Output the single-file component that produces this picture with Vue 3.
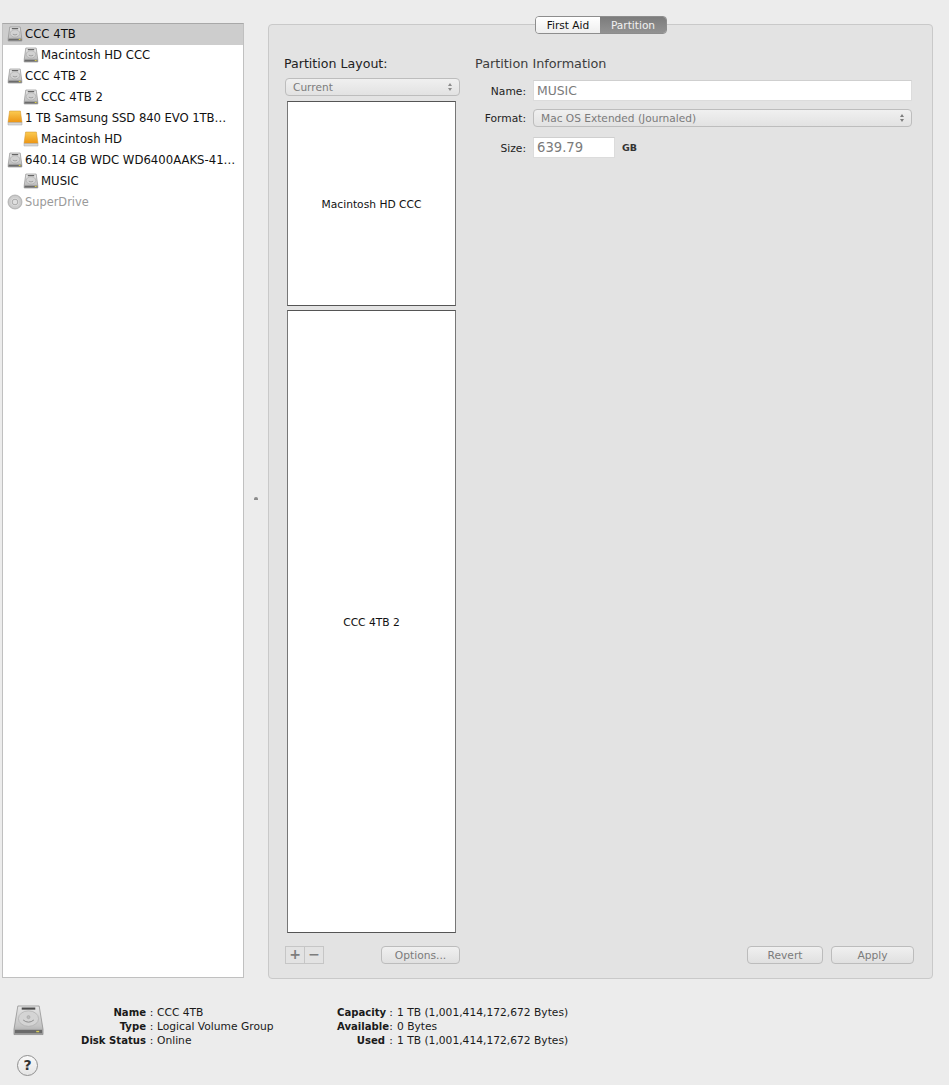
<script setup>
const disks = [
  { label: 'CCC 4TB', kind: 'hd', child: false, selected: true },
  { label: 'Macintosh HD CCC', kind: 'hd', child: true },
  { label: 'CCC 4TB 2', kind: 'hd', child: false },
  { label: 'CCC 4TB 2', kind: 'hd', child: true },
  { label: '1 TB Samsung SSD 840 EVO 1TB…', kind: 'ssd', child: false, tight: true },
  { label: 'Macintosh HD', kind: 'ssd', child: true },
  { label: '640.14 GB WDC WD6400AAKS-41…', kind: 'hd', child: false },
  { label: 'MUSIC', kind: 'hd', child: true },
  { label: 'SuperDrive', kind: 'cd', child: false, muted: true }
]
const infoLeft = [
  ['Name', 'CCC 4TB'],
  ['Type', 'Logical Volume Group'],
  ['Disk Status', 'Online']
]
const infoRight = [
  ['Capacity', '1 TB (1,001,414,172,672 Bytes)'],
  ['Available', '0 Bytes'],
  ['Used', '1 TB (1,001,414,172,672 Bytes)']
]
</script>

<template>
  <div class="window">
    <svg class="defs" width="0" height="0" aria-hidden="true">
      <defs>
        <linearGradient id="hdBody" x1="0" y1="0" x2="0" y2="1">
          <stop offset="0" stop-color="#e6e6e6" />
          <stop offset="0.7" stop-color="#c4c4c4" />
          <stop offset="1" stop-color="#a2a2a2" />
        </linearGradient>
        <linearGradient id="ssdBody" x1="0" y1="0" x2="0" y2="1">
          <stop offset="0" stop-color="#fbcb52" />
          <stop offset="1" stop-color="#ec9412" />
        </linearGradient>
        <radialGradient id="cdBody">
          <stop offset="0" stop-color="#f4f4f4" />
          <stop offset="0.6" stop-color="#d8d8d8" />
          <stop offset="1" stop-color="#bdbdbd" />
        </radialGradient>
      </defs>
    </svg>

    <div class="main">
      <aside class="sidebar">
        <div
          v-for="(d, i) in disks"
          :key="i"
          class="row"
          :class="{ child: d.child, selected: d.selected, muted: d.muted, tight: d.tight }"
        >
          <svg v-if="d.kind === 'hd'" class="ico" viewBox="0 0 16 16">
            <path d="M2.8 1h10.4l1.6 11.5V15H1.2v-2.5z" fill="url(#hdBody)" stroke="#858585" stroke-width=".6" />
            <rect x="4.8" y="2" width="6.4" height="1.2" fill="#666" />
            <ellipse cx="8" cy="7.4" rx="4.8" ry="3.7" fill="#d2d2d2" stroke="#a0a0a0" stroke-width=".5" />
            <path d="M5.8 8.2q2.2 1.5 4.4 0" fill="none" stroke="#8a8a8a" stroke-width=".7" />
            <rect x="1.6" y="12.7" width="12.8" height="1.7" fill="#6c6c6c" />
            <rect x="11.8" y="13.1" width="1.8" height=".9" fill="#e8d83c" />
          </svg>
          <svg v-else-if="d.kind === 'ssd'" class="ico" viewBox="0 0 16 16">
            <path d="M2.6 1h10.8l1.6 11.5H1z" fill="url(#ssdBody)" stroke="#cf9128" stroke-width=".5" />
            <path d="M1 12.5h14V15H1z" fill="#d6d6d6" stroke="#a5a5a5" stroke-width=".5" />
          </svg>
          <svg v-else class="ico" viewBox="0 0 16 16">
            <circle cx="8" cy="8" r="7" fill="url(#cdBody)" stroke="#a6a6a6" stroke-width=".7" />
            <circle cx="8" cy="8" r="4.6" fill="none" stroke="#c8c8c8" stroke-width=".6" />
            <circle cx="8" cy="8" r="2.8" fill="#e8e8e8" stroke="#8d8d8d" stroke-width=".7" />
            <circle cx="8" cy="8" r="1.1" fill="#fff" stroke="#aaa" stroke-width=".4" />
          </svg>
          <span class="label">{{ d.label }}</span>
        </div>
      </aside>

      <div class="divider"><span class="grip"></span></div>

      <section class="panel">
        <div class="tabs">
          <span class="tab">First Aid</span>
          <span class="tab active">Partition</span>
        </div>

        <div class="columns">
          <div class="layout">
            <h2 class="heading">Partition Layout:</h2>
            <div class="select small">
              <span>Current</span>
              <svg class="updown" viewBox="0 0 6 10"><path d="M3 1l2 3H1zM3 9L1 6h4z" fill="#8b8b8b" /></svg>
            </div>
            <div class="blocks">
              <div class="block top">Macintosh HD CCC</div>
              <div class="block bottom">CCC 4TB 2</div>
            </div>
            <div class="layout-actions">
              <div class="stepper">
                <span>+</span>
                <span>−</span>
              </div>
              <button class="btn options">Options...</button>
            </div>
          </div>

          <div class="info">
            <h2 class="heading dim">Partition Information</h2>
            <div class="form">
              <label class="lbl nudge">Name:</label>
              <div class="input wide">MUSIC</div>
              <label class="lbl">Format:</label>
              <div class="select format">
                <span>Mac OS Extended (Journaled)</span>
                <svg class="updown" viewBox="0 0 6 10"><path d="M3 1l2 3H1zM3 9L1 6h4z" fill="#7d7d7d" /></svg>
              </div>
              <label class="lbl nudge size-lbl">Size:</label>
              <div class="size-row">
                <div class="input short">639.79</div>
                <span class="unit">GB</span>
              </div>
            </div>
            <div class="info-actions">
              <button class="btn revert">Revert</button>
              <button class="btn apply">Apply</button>
            </div>
          </div>
        </div>
      </section>
    </div>

    <footer class="footer">
      <div class="footer-icons">
        <svg class="big-hd" viewBox="0 0 32 32">
          <path d="M5 1h22l4 24v5.5H1V25z" fill="url(#hdBody)" stroke="#868686" stroke-width=".7" />
          <rect x="9" y="2.6" width="14" height="2.2" fill="#4c4c4c" />
          <ellipse cx="16" cy="14" rx="10.4" ry="8" fill="#d4d4d4" stroke="#adadad" stroke-width=".7" />
          <circle cx="16" cy="12.5" r="1.6" fill="#bcbcbc" stroke="#9c9c9c" stroke-width=".5" />
          <path d="M10.5 15.5q5.5 4.4 11 0" fill="none" stroke="#8a8a8a" stroke-width="1" />
          <rect x="2" y="25.6" width="28" height="3.6" fill="#6a6a6a" />
          <rect x="24" y="26.7" width="3" height="1.4" fill="#d9cf55" />
        </svg>
        <div class="help">?</div>
      </div>
      <div class="details">
        <div class="detail-group first">
          <template v-for="r in infoLeft" :key="r[0]">
            <span class="k">{{ r[0] }}</span><span class="c">:</span><span class="v">{{ r[1] }}</span>
          </template>
        </div>
        <div class="detail-group second">
          <template v-for="r in infoRight" :key="r[0]">
            <span class="k">{{ r[0] }}</span><span class="c">:</span><span class="v">{{ r[1] }}</span>
          </template>
        </div>
      </div>
    </footer>
  </div>
</template>

<style>
html, body { margin: 0; background: #ececec; }
</style>

<style scoped>
.window {
  width: 949px;
  height: 1085px;
  background: #ececec;
  font-family: "DejaVu Sans", "Liberation Sans", sans-serif;
  color: #111;
  display: flex;
  flex-direction: column;
  overflow: hidden;
  box-sizing: border-box;
}
.defs { position: absolute; }
.main {
  display: flex;
  padding: 23px 16px 0 2px;
  height: 956px;
  box-sizing: border-box;
}
.sidebar {
  width: 242px;
  height: 955px;
  box-sizing: border-box;
  background: #fff;
  border: 1px solid #c0c0c0;
  border-top-color: #a8a8a8;
  flex: none;
}
.row {
  height: 21px;
  box-sizing: border-box;
  padding-bottom: 2px;
  display: flex;
  align-items: center;
  padding-left: 4px;
  font-size: 11.7px;
  white-space: nowrap;
}
.row.child { padding-left: 20px; }
.row.selected { background: #cdcdcd; }
.row.muted { color: #9a9a9a; font-size: 11.4px; }
.row.tight { letter-spacing: -0.1px; }
.ico { width: 16px; height: 16px; flex: none; margin-right: 2px; }
.divider {
  width: 24px;
  flex: none;
  display: flex;
  align-items: center;
  justify-content: center;
}
.grip {
  width: 4px;
  height: 3px;
  border-radius: 2px 2px 0 0;
  background: #8c8c8c;
  margin-top: 18px;
}
.panel {
  position: relative;
  width: 665px;
  height: 955px;
  margin-top: 1px;
  box-sizing: border-box;
  background: #e3e3e3;
  border: 1px solid #c9c9c9;
  border-radius: 4px;
}
.tabs {
  position: absolute;
  top: -9px;
  left: 266px;
  display: flex;
  height: 18px;
  box-sizing: border-box;
  border: 1px solid #8d8d8d;
  border-radius: 4px;
  overflow: hidden;
  font-size: 10.6px;
}
.tab {
  display: flex;
  align-items: center;
  justify-content: center;
  width: 64px;
  background: linear-gradient(#ffffff, #eeeeee);
  color: #111;
}
.tab.active {
  width: 66px;
  background: linear-gradient(#7c7c7c, #929292);
  color: #f2f2f2;
}
.columns {
  display: flex;
  height: 100%;
  box-sizing: border-box;
  padding: 32px 18px 14px 15px;
}
.layout {
  width: 176px;
  flex: none;
  display: flex;
  flex-direction: column;
  margin-right: 15px;
}
.heading {
  margin: 0;
  font-size: 12.6px;
  font-weight: 400;
  line-height: 13px;
  color: #222;
  white-space: nowrap;
}
.heading.dim { color: #3d3d3d; font-size: 12.8px; }
.select {
  box-sizing: border-box;
  display: flex;
  align-items: center;
  justify-content: space-between;
  height: 18px;
  border: 1px solid #bdbdbd;
  border-radius: 4px;
  background: linear-gradient(#f0f0f0, #e2e2e2);
  color: #7b7b7b;
  font-size: 10.6px;
}
.select.small {
  margin: 8px 0 0 1px;
  padding: 0 6px 0 7px;
  width: 175px;
}
.updown { width: 6px; height: 10px; flex: none; }
.blocks {
  margin: 5px 0 0 3px;
  width: 169px;
  flex: 1;
  display: flex;
  flex-direction: column;
  gap: 4px;
}
.block {
  box-sizing: border-box;
  background: #fff;
  border: 1px solid #777;
  border-top-color: #555;
  border-bottom-color: #555;
  padding-top: 2px;
  display: flex;
  align-items: center;
  justify-content: center;
  font-size: 10.7px;
  color: #111;
}
.block.top { height: 205px; }
.block.bottom { flex: 1; }
.layout-actions {
  margin-top: 13px;
  display: flex;
  justify-content: space-between;
  align-items: center;
  height: 18px;
  padding-left: 1px;
}
.stepper {
  display: flex;
  height: 18px;
  box-sizing: border-box;
  border: 1px solid #c6c6c6;
  color: #7d7d7d;
  font-weight: 700;
  font-size: 14px;
  line-height: 15px;
}
.stepper span {
  width: 18px;
  text-align: center;
}
.stepper span:first-child { border-right: 1px solid #c6c6c6; }
.btn {
  height: 18px;
  box-sizing: border-box;
  padding: 0;
  border: 1px solid #bcbcbc;
  border-radius: 4px;
  background: linear-gradient(#f0f0f0, #e0e0e0);
  color: #7b7b7b;
  font-family: inherit;
  font-size: 10.7px;
}
.btn.options { width: 79px; }
.btn.revert { width: 76px; }
.btn.apply { width: 83px; }
.info {
  flex: 1;
  display: flex;
  flex-direction: column;
  min-width: 0;
}
.form {
  margin-top: 10px;
  display: grid;
  grid-template-columns: 51px 379px;
  column-gap: 7px;
  row-gap: 8px;
  align-items: center;
}
.lbl {
  text-align: right;
  font-size: 10.7px;
  color: #222;
}
.lbl.nudge { padding-top: 2px; }
.size-lbl { margin-top: 2px; }
.input {
  box-sizing: border-box;
  height: 21px;
  background: #fff;
  border: 1px solid #dcdcdc;
  border-top-color: #cfcfcf;
  color: #7b7b7b;
  font-size: 12.4px;
  line-height: 20px;
  padding-left: 3px;
}
.input.short { width: 82px; font-size: 13.2px; }
.select.format {
  padding: 0 6px 0 7px;
}
.size-row {
  display: flex;
  align-items: center;
  gap: 7px;
  margin-top: 2px;
}
.unit {
  font-size: 9.5px;
  font-weight: 700;
  color: #333;
}
.info-actions {
  margin-top: auto;
  display: flex;
  justify-content: flex-end;
  gap: 8px;
}
.footer {
  display: flex;
  flex: 1;
}
.footer-icons {
  width: 54px;
  flex: none;
  padding: 49px 0 0 13px;
  box-sizing: border-box;
  display: flex;
  flex-direction: column;
}
.big-hd { width: 31px; height: 31px; flex: none; }
.help {
  margin: 19px 0 0 4px;
  width: 21px;
  height: 21px;
  box-sizing: border-box;
  border: 1px solid #8f8f8f;
  border-radius: 50%;
  background: linear-gradient(#fafafa, #e4e4e4);
  text-align: center;
  font-size: 14px;
  font-weight: 700;
  line-height: 19px;
  color: #333;
}
.details {
  display: flex;
  padding-top: 50px;
}
.detail-group {
  display: grid;
  grid-auto-rows: 14px;
  font-size: 10.7px;
  line-height: 14px;
  align-content: start;
  color: #1a1a1a;
}
.detail-group.first {
  grid-template-columns: 92px 11px auto;
  width: 283px;
}
.detail-group.second {
  grid-template-columns: 48px 12px auto;
}
.k { font-weight: 700; font-size: 10.1px; text-align: right; white-space: nowrap; }
.c { text-align: center; }
.v { white-space: nowrap; }
</style>
